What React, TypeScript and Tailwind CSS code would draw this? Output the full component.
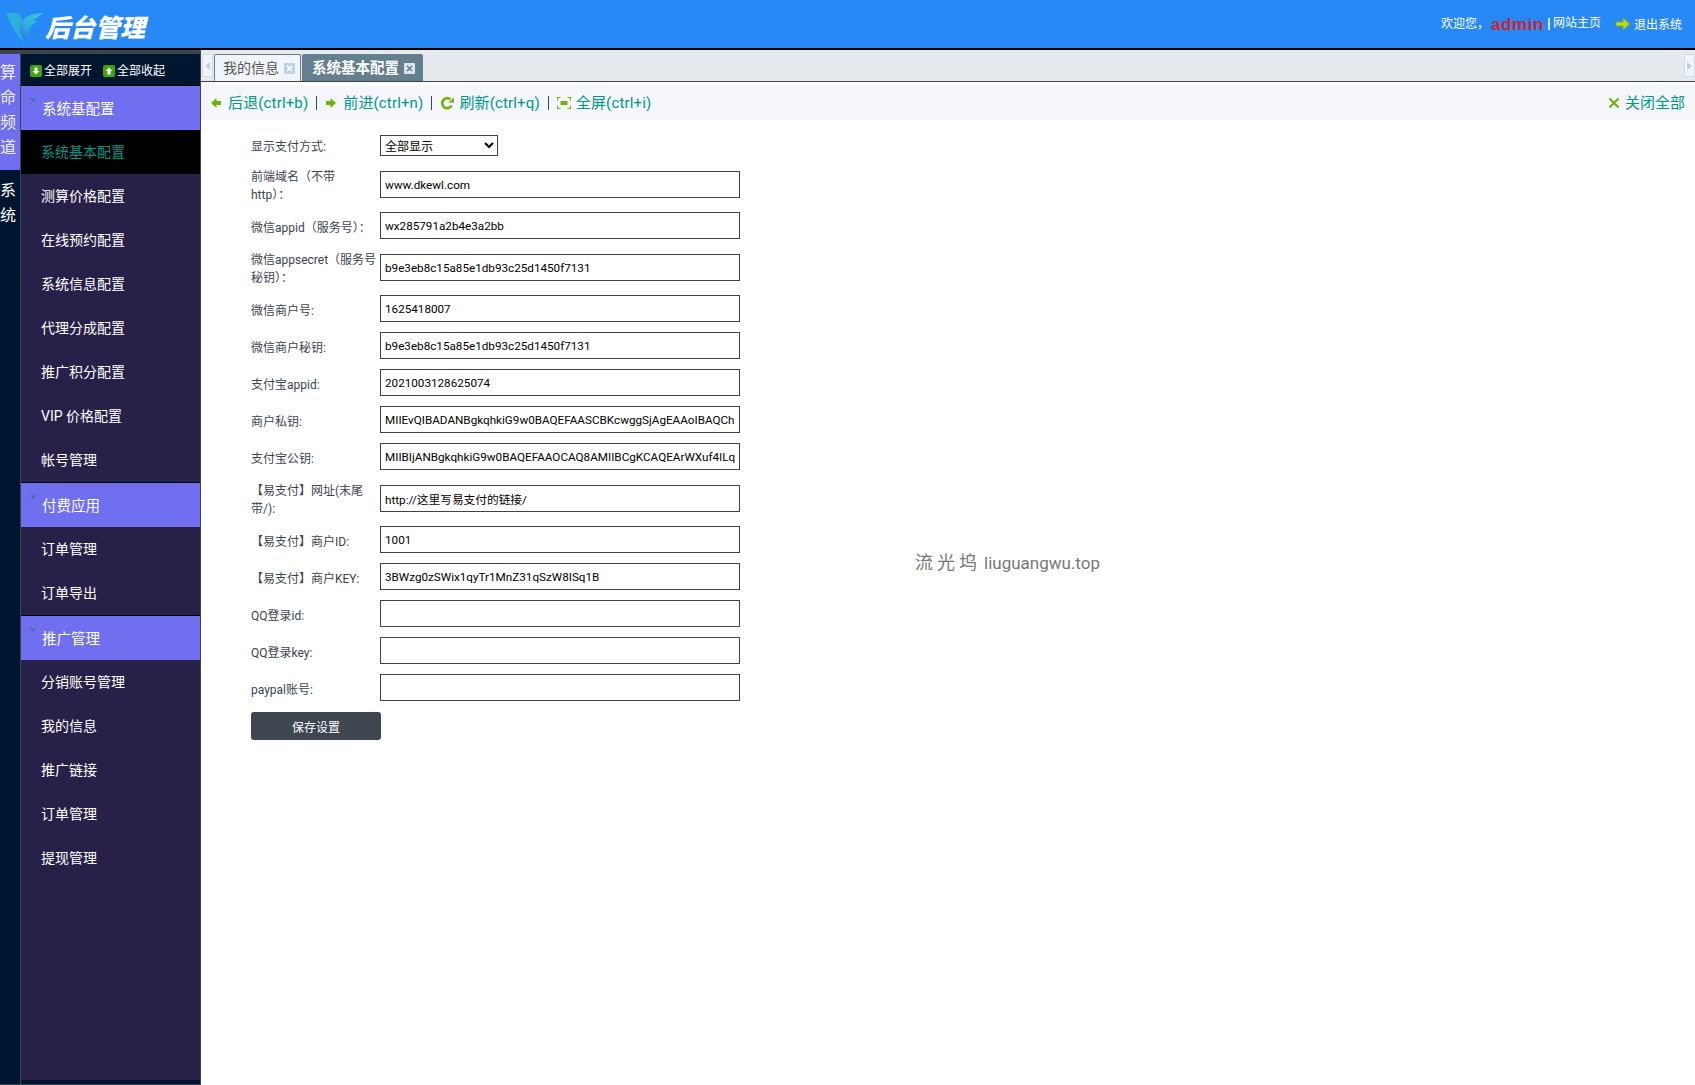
import type { ReactNode } from "react";

const groups = [
  {
    title: "系统基配置",
    items: ["系统基本配置", "测算价格配置", "在线预约配置", "系统信息配置", "代理分成配置", "推广积分配置", "VIP 价格配置", "帐号管理"],
  },
  { title: "付费应用", items: ["订单管理", "订单导出"] },
  { title: "推广管理", items: ["分销账号管理", "我的信息", "推广链接", "订单管理", "提现管理"] },
];

// gap = space above the row, the rows with wrapped labels sit further apart
const fields = [
  { label: "前端域名（不带\nhttp）：", value: "www.dkewl.com", gap: "mt-[15px]" },
  { label: "微信appid（服务号）：", value: "wx285791a2b4e3a2bb", gap: "mt-[14px]" },
  { label: "微信appsecret（服务号\n秘钥）：", value: "b9e3eb8c15a85e1db93c25d1450f7131", gap: "mt-[15px]" },
  { label: "微信商户号:", value: "1625418007", gap: "mt-[14px]" },
  { label: "微信商户秘钥:", value: "b9e3eb8c15a85e1db93c25d1450f7131", gap: "mt-[10px]" },
  { label: "支付宝appid:", value: "2021003128625074", gap: "mt-[10px]" },
  { label: "商户私钥:", value: "MIIEvQIBADANBgkqhkiG9w0BAQEFAASCBKcwggSjAgEAAoIBAQChxT3mRk2wY8sZ", gap: "mt-[10px]" },
  { label: "支付宝公钥:", value: "MIIBIjANBgkqhkiG9w0BAQEFAAOCAQ8AMIIBCgKCAQEArWXuf4ILqN7vT2bYk", gap: "mt-[10px]" },
  { label: "【易支付】网址(末尾\n带/):", value: "http://这里写易支付的链接/", gap: "mt-[15px]" },
  { label: "【易支付】商户ID:", value: "1001", gap: "mt-[14px]" },
  { label: "【易支付】商户KEY:", value: "3BWzg0zSWix1qyTr1MnZ31qSzW8ISq1B", gap: "mt-[10px]" },
  { label: "QQ登录id:", value: "", gap: "mt-[10px]" },
  { label: "QQ登录key:", value: "", gap: "mt-[10px]" },
  { label: "paypal账号:", value: "", gap: "mt-[10px]" },
];

function Logo() {
  return (
    <svg width="40" height="32" viewBox="0 0 40 32" className="shrink-0">
      <defs>
        <linearGradient id="swoosh" x1="1" y1="0" x2="0.2" y2="1">
          <stop offset="0" stopColor="#35c9d6" />
          <stop offset="0.55" stopColor="#2fb4e0" />
          <stop offset="1" stopColor="#2f74e6" />
        </linearGradient>
      </defs>
      <path d="M1 1 L14 1 C17 8 19 13 21 17 L20 31 C12 24 6 13 1 1 Z" fill="#2fb6d8" opacity="0.85" />
      <path d="M38 1 C28 1 18 4 15 13 C14 20 17 27 21 31 C22 24 24 16 27 13 C29 11 31 10 33 9 L28 9 C31 6 35 4 38 1 Z" fill="url(#swoosh)" />
    </svg>
  );
}

function SquareArrow({ up }: { up?: boolean }) {
  return (
    <svg width="12" height="12" viewBox="0 0 12 12" className="shrink-0">
      <rect width="12" height="12" rx="2" fill="#3aa60f" />
      <path d={up ? "M6 2.5 L9.5 6 H7.5 V9.5 H4.5 V6 H2.5 Z" : "M6 9.5 L2.5 6 H4.5 V2.5 H7.5 V6 H9.5 Z"} fill="#fff" />
    </svg>
  );
}

function TabClose({ active }: { active?: boolean }) {
  return (
    <svg width="11" height="11" viewBox="0 0 11 11" className="shrink-0">
      <rect width="11" height="11" rx="1" fill={active ? "#dbe5ef" : "#bcd2ea"} />
      <path d="M3 3 L8 8 M8 3 L3 8" stroke={active ? "#647f8e" : "#fff"} strokeWidth="1.6" />
    </svg>
  );
}

function ToolIcon({ children, w = 11 }: { children: ReactNode; w?: number }) {
  return (
    <svg width={w} height="14" viewBox={`0 0 ${w} 14`} className="shrink-0">
      {children}
    </svg>
  );
}

function Separator() {
  return <span className="mx-[8px] h-[14px] w-px bg-[#3b4350]" />;
}

function Scroller({ right }: { right?: boolean }) {
  return (
    <div className="flex h-[23px] w-[11px] items-center justify-center border border-[#cfdbe9] bg-[#f1f4f9]">
      <svg width="5" height="8" viewBox="0 0 5 8">
        <path d={right ? "M0 0 L5 4 L0 8 Z" : "M5 0 L0 4 L5 8 Z"} fill="#c3cfde" />
      </svg>
    </div>
  );
}

export default function App() {
  return (
    <div className="relative flex h-screen w-full flex-col overflow-hidden bg-white font-['Roboto','Noto_Sans_CJK_SC',sans-serif] text-[12px]">
      {/* Header */}
      <header className="flex h-[50px] shrink-0 items-center justify-between border-b-2 border-black bg-[#2789f6] pl-[5px] pr-[13px]">
        <div className="flex items-center pt-[8px]">
          <Logo />
          <span className="text-[25px] font-black italic leading-none text-white">后台管理</span>
        </div>
        <div className="flex items-center text-white">
          <span>欢迎您，</span>
          <span className="ml-[2px] font-['Liberation_Sans',sans-serif] text-[17px] font-bold leading-none tracking-[0.6px] text-[#d3222a]">admin</span>
          <span className="ml-[4px] h-[12px] w-[2px] bg-[#cfe8ff]" />
          <span className="mb-[2px] ml-[3px]">网站主页</span>
          <svg width="16" height="16" viewBox="0 0 16 16" className="ml-[14px] shrink-0">
            <path d="M1 6 H8 V2 L15 8 L8 14 V10 H1 Z" fill="#b5dc1c" stroke="#7fa612" strokeWidth="0.8" />
          </svg>
          <span className="ml-[3px] mt-[2px]">退出系统</span>
        </div>
      </header>

      <div className="flex min-h-0 flex-1">
        {/* Left navigation */}
        <aside className="flex w-[201px] shrink-0 gap-px bg-[#3b4350] pb-px pr-px pt-[4px]">
          <div className="w-[20px] shrink-0 bg-[#00152f] text-[16px] leading-[25px] text-white">
            <div className="bg-[#706ff0] pb-[10px] pt-[6px] text-[#eee]">
              <div>算</div>
              <div>命</div>
              <div>频</div>
              <div>道</div>
            </div>
            <div className="pt-[8px]">
              <div>系</div>
              <div>统</div>
            </div>
          </div>

          <nav className="flex w-[179px] shrink-0 flex-col bg-[#272149]">
            <div className="flex h-[31px] shrink-0 items-center bg-[#00152f] pl-[9px] pt-[2px] text-white">
              <SquareArrow />
              <span className="ml-[2px]">全部展开</span>
              <span className="ml-[11px]">
                <SquareArrow up />
              </span>
              <span className="ml-[2px]">全部收起</span>
            </div>
            {groups.map((group) => (
              <div key={group.title} className="border-t border-black">
                <div className="relative flex h-[44px] items-center bg-[#706ff0] pl-[21px] pt-[3px] text-[14.5px] text-white">
                  <svg width="8" height="5" viewBox="0 0 8 5" className="absolute left-[8px] top-[11px]">
                    <path d="M0 0 L4 2 L8 0 L4 5 Z" fill="#3f6f9c" />
                  </svg>
                  {group.title}
                </div>
                {group.items.map((item) => (
                  <div
                    key={item}
                    className={
                      item === "系统基本配置"
                        ? "flex h-[44px] items-center bg-black pl-[20px] text-[14px] text-[#009688]"
                        : "flex h-[44px] items-center pl-[20px] text-[14px] text-white"
                    }
                  >
                    {item}
                  </div>
                ))}
              </div>
            ))}
            <div className="flex-1" />
            <div className="h-[4px] shrink-0 bg-[#00152f]" />
          </nav>
        </aside>

        <main className="flex min-w-0 flex-1 flex-col">
          {/* Tabs */}
          <div className="flex h-[32px] shrink-0 items-end justify-between border-b border-[#3b4350] bg-[#e6e9ee] pl-px">
            <div className="flex h-full items-end">
              <div className="mb-[4px]">
                <Scroller />
              </div>
              <div className="ml-px flex h-[27px] w-[87px] items-center rounded-t-[2px] border border-b-0 border-[#647f8e] bg-[#f1f4f9] pl-[8px] text-[14px] text-[#555]">
                我的信息
                <span className="ml-[5px]">
                  <TabClose />
                </span>
              </div>
              <div className="ml-px flex h-[27px] w-[121px] items-center rounded-t-[2px] bg-[#647f8e] pl-[10px] pt-[2px] text-[14.5px] font-bold text-white">
                系统基本配置
                <span className="ml-[5px]">
                  <TabClose active />
                </span>
              </div>
            </div>
            <div className="mb-[4px]">
              <Scroller right />
            </div>
          </div>

          {/* Toolbar */}
          <div className="mt-[3px] flex h-[35px] shrink-0 items-center justify-between bg-[#f4f6fa] pl-[10px] pr-[10px] pt-px text-[15px] text-[#009688]">
            <div className="flex items-center tracking-[0.15px]">
              <ToolIcon>
                <path d="M0 7 L5.5 2 V5 H10 V9 H5.5 V12 Z" fill="#6db30a" />
              </ToolIcon>
              <span className="ml-[6px]">后退(ctrl+b)</span>
              <Separator />
              <ToolIcon>
                <path d="M11 7 L5.5 2 V5 H1 V9 H5.5 V12 Z" fill="#6db30a" />
              </ToolIcon>
              <span className="ml-[7px]">前进(ctrl+n)</span>
              <Separator />
              <ToolIcon w={14}>
                <path d="M11.6 9.5 A5 5 0 1 1 10.5 3.4" fill="none" stroke="#6db30a" strokeWidth="2.6" />
                <path d="M8.5 6.5 H14 V1.5 Z" fill="#6db30a" />
              </ToolIcon>
              <span className="ml-[5px]">刷新(ctrl+q)</span>
              <Separator />
              <ToolIcon w={14}>
                <path d="M0.5 4.5 V1.5 H3.5 M10.5 1.5 H13.5 V4.5 M13.5 9.5 V12.5 H10.5 M3.5 12.5 H0.5 V9.5" fill="none" stroke="#6db30a" strokeWidth="1.2" />
                <rect x="3.5" y="5" width="7" height="4" fill="#6db30a" />
              </ToolIcon>
              <span className="ml-[5px]">全屏(ctrl+i)</span>
            </div>
            <div className="flex items-center">
              <svg width="12" height="12" viewBox="0 0 12 12" className="shrink-0">
                <path d="M1.5 1.5 L10.5 10.5 M10.5 1.5 L1.5 10.5" stroke="#7aaf10" strokeWidth="2.2" />
              </svg>
              <span className="ml-[5px]">关闭全部</span>
            </div>
          </div>

          {/* Config form */}
          <form className="pl-[50px] pt-[15px] text-[#3b4350]">
            <div className="flex items-center">
              <label className="flex h-[21px] w-[129px] items-center pt-[3px]">显示支付方式:</label>
              <select className="h-[21px] w-[118px] rounded-none border border-[#3b4350] bg-white pl-0 pt-[2px] text-black">
                <option>全部显示</option>
              </select>
            </div>
            {fields.map((field) => (
              <div key={field.label} className={`flex items-center ${field.gap}`}>
                <label
                  className={
                    field.label.includes("\n")
                      ? "flex h-[27px] w-[129px] shrink-0 items-center whitespace-pre-line pt-[2px] leading-[18px]"
                      : "flex h-[27px] w-[129px] shrink-0 items-center pt-[4px] leading-[18px]"
                  }
                >
                  {field.label}
                </label>
                <input
                  readOnly
                  defaultValue={field.value}
                  className="h-[27px] w-[360px] border border-[#3b4350] bg-white px-[4px] text-[11.7px] text-black outline-none"
                />
              </div>
            ))}
            <button type="button" className="mt-[11px] h-[28px] w-[130px] rounded-[3px] bg-[#3e4651] pt-[3px] text-white">
              保存设置
            </button>
          </form>
        </main>
      </div>

      {/* Watermark */}
      <div className="absolute left-[915px] top-[551px] text-[18px] leading-[24px] text-[#777]">
        <span className="tracking-[4px]">流光坞</span>
        <span className="ml-[3px] text-[17px]">liuguangwu.top</span>
      </div>
    </div>
  );
}
